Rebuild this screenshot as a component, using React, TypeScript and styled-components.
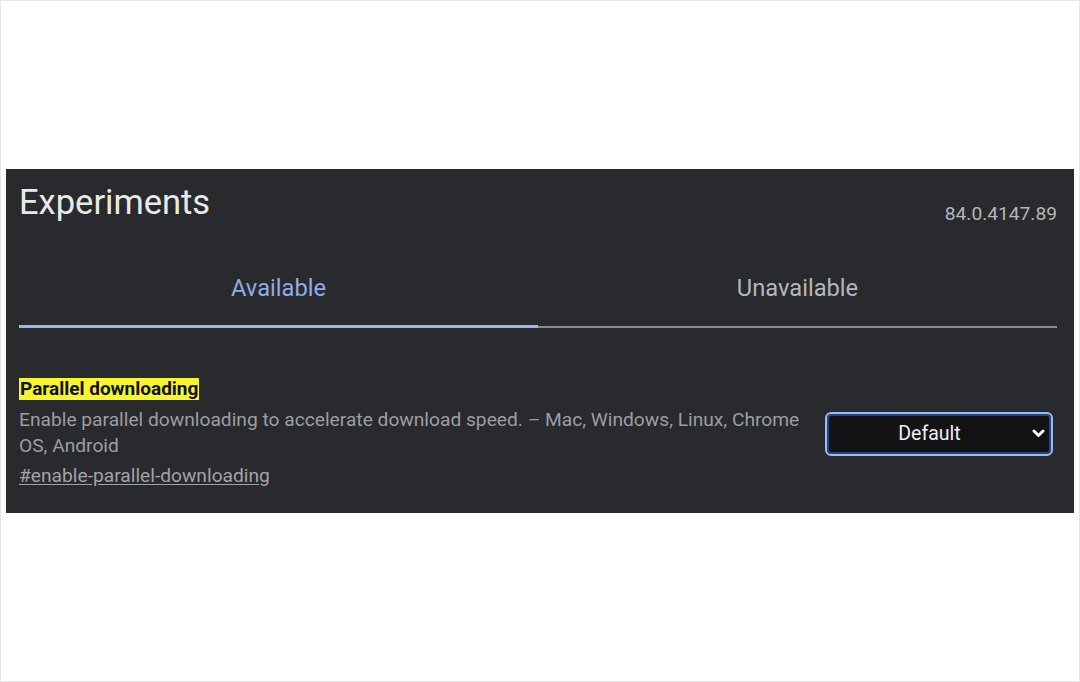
import styled, { createGlobalStyle } from 'styled-components';

const GlobalStyle = createGlobalStyle`
  html, body {
    margin: 0;
    padding: 0;
    background: #ffffff;
  }
  body {
    font-family: Roboto, "Liberation Sans", Arial, sans-serif;
  }
`;

const tabs = [
  { label: 'Available', active: true },
  { label: 'Unavailable', active: false },
];

const App = () => {
  return (
    <>
      <GlobalStyle />
      <Frame>
        <Panel>
          <Header>
            <Title>Experiments</Title>
            <Version>84.0.4147.89</Version>
          </Header>
          <TabList>
            {tabs.map((tab) => (
              <Tab key={tab.label} $active={tab.active}>
                {tab.label}
              </Tab>
            ))}
          </TabList>
          <Experiment>
            <Details>
              <Name>Parallel downloading</Name>
              <Description>
                Enable parallel downloading to accelerate download speed. – Mac,
                Windows, Linux, Chrome OS, Android
              </Description>
              <Permalink href="#enable-parallel-downloading">
                #enable-parallel-downloading
              </Permalink>
            </Details>
            <SelectBox>
              <SelectValue>Default</SelectValue>
              <Chevron width="13" height="9" viewBox="0 0 13 9">
                <path
                  d="M2 2l4.5 4.5L11 2"
                  fill="none"
                  stroke="#f4f4f4"
                  strokeWidth="3"
                  strokeLinecap="round"
                  strokeLinejoin="round"
                />
              </Chevron>
            </SelectBox>
          </Experiment>
        </Panel>
      </Frame>
    </>
  );
};

const Frame = styled.div`
  box-sizing: border-box;
  width: 1080px;
  height: 682px;
  border: 1px solid #e6e6e6;
  padding: 168px 5px 0 5px;
`;

const Panel = styled.div`
  box-sizing: border-box;
  width: 1068px;
  height: 344px;
  background: #282a2e;
  padding: 14px 17px 0 13px;
  display: flex;
  flex-direction: column;
`;

const Header = styled.div`
  display: flex;
  justify-content: space-between;
  align-items: flex-start;
`;

const Title = styled.h1`
  margin: 0;
  font-size: 34.5px;
  font-weight: 400;
  line-height: 38px;
  color: #e9e9ea;
`;

const Version = styled.span`
  margin-top: 20px;
  font-size: 19.2px;
  line-height: 22px;
  color: #b4b5b7;
`;

const TabList = styled.div`
  display: flex;
  margin-top: 32px;
`;

const Tab = styled.div<{ $active: boolean }>`
  flex: 1;
  height: 71px;
  display: flex;
  align-items: center;
  justify-content: center;
  padding-bottom: 10px;
  box-sizing: border-box;
  font-size: 23.7px;
  color: ${(props) => (props.$active ? '#92aae6' : '#b6b7b9')};
  box-shadow: ${(props) =>
    props.$active ? 'inset 0 -3px 0 #a3b3ef' : 'inset 0 -2px 0 #8b8c8e'};
`;

const Experiment = styled.div`
  display: flex;
  align-items: center;
  justify-content: space-between;
  margin-top: 50px;
`;

const Details = styled.div`
  width: 800px;
  display: flex;
  flex-direction: column;
  align-items: flex-start;
`;

const Name = styled.span`
  background: #f7f52e;
  color: #111111;
  font-size: 19px;
  font-weight: 700;
  line-height: 22px;
  padding: 0 1px;
`;

const Description = styled.p`
  margin: 7px 0 0;
  font-size: 19.2px;
  line-height: 26px;
  color: #9c9ea1;
`;

const Permalink = styled.a`
  margin-top: 4px;
  font-size: 19.2px;
  line-height: 26px;
  color: #a2a3a6;
  text-decoration: underline;
  text-underline-offset: 2px;
`;

const SelectBox = styled.div`
  box-sizing: border-box;
  width: 228px;
  height: 44px;
  margin-right: 4px;
  border: 2px solid #9cb9f2;
  border-radius: 6px;
  background: #131315;
  box-shadow: inset 0 0 0 2px #24457e;
  display: flex;
  align-items: center;
  padding: 0 6px 0 0;
`;

const SelectValue = styled.span`
  flex: 1;
  text-align: center;
  font-size: 19.5px;
  color: #eeeeee;
`;

const Chevron = styled.svg`
  flex-shrink: 0;
`;

export default App;
